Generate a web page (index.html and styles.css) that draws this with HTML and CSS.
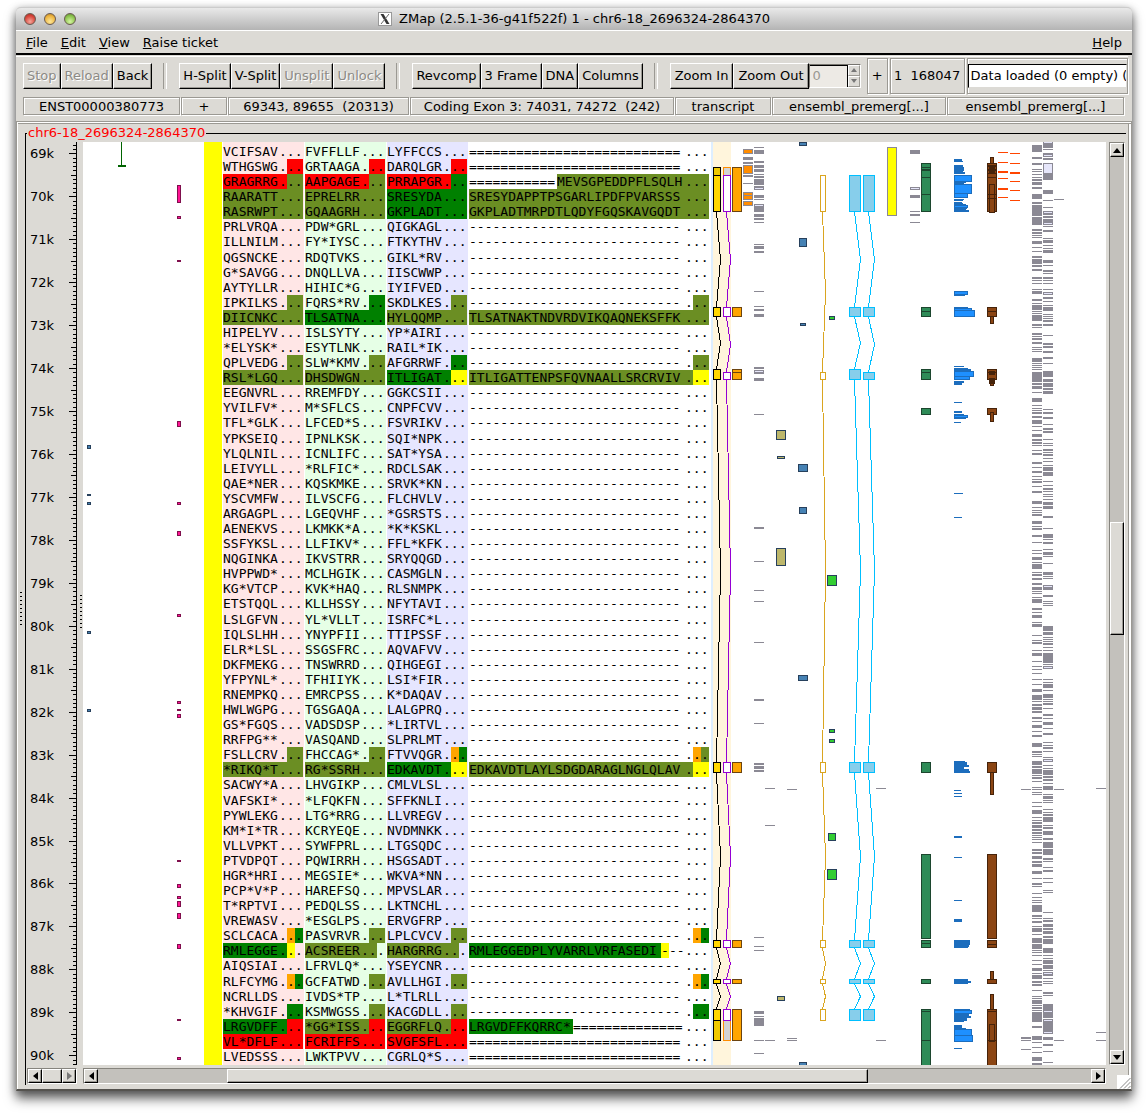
FILE: index.html
```html
<!DOCTYPE html>
<html lang="en">
<head>
<meta charset="utf-8">
<title>ZMap (2.5.1-36-g41f522f) 1 - chr6-18_2696324-2864370</title>
<link rel="stylesheet" href="styles.css">
</head>
<body>
<div class="window">
  <header class="titlebar">
    <div class="lights"><span class="light red"></span><span class="light amber"></span><span class="light green"></span></div>
    <h1 class="title">
      <svg class="xicon" width="14" height="14" viewBox="0 0 14 14" aria-hidden="true"><rect x=".5" y=".5" width="13" height="13" fill="#fff" stroke="#999"/><path d="M2.500 2h3l6 10h-3z" fill="#333"/><path d="M11 2L3 12" stroke="#666" fill="none"/></svg>
      ZMap (2.5.1-36-g41f522f) 1 - chr6-18_2696324-2864370
    </h1>
  </header>

  <nav class="menubar">
    <button type="button"><u>F</u>ile</button>
    <button type="button"><u>E</u>dit</button>
    <button type="button"><u>V</u>iew</button>
    <button type="button"><u>R</u>aise ticket</button>
    <button type="button" class="help"><u>H</u>elp</button>
  </nav>

  <div class="toolbar">
    <div class="group">
      <button type="button" class="btn" disabled>Stop</button><button type="button" class="btn" disabled>Reload</button><button type="button" class="btn">Back</button>
    </div>
    <div class="group">
      <button type="button" class="btn">H-Split</button><button type="button" class="btn">V-Split</button><button type="button" class="btn" disabled>Unsplit</button><button type="button" class="btn" disabled>Unlock</button>
    </div>
    <div class="group">
      <button type="button" class="btn">Revcomp</button><button type="button" class="btn">3 Frame</button><button type="button" class="btn">DNA</button><button type="button" class="btn">Columns</button>
    </div>
    <div class="group last">
      <button type="button" class="btn">Zoom In</button><button type="button" class="btn">Zoom Out</button>
      <div class="spin">
        <input type="text" value="0" aria-label="Filter" disabled>
        <div class="steps">
          <button type="button" disabled aria-label="Increase"><svg width="6" height="4"><path d="M3 0l3 4H0z" fill="#777"/></svg></button>
          <button type="button" disabled aria-label="Decrease"><svg width="6" height="4"><path d="M0 0h6L3 4z" fill="#777"/></svg></button>
        </div>
      </div>
    </div>
    <div class="status">
      <div class="etched">+</div>
      <div class="etched range">1  168047</div>
      <div class="etched entry"><input type="text" value="Data loaded (0 empty) (" aria-label="Load status" readonly></div>
    </div>
  </div>

  <div class="infobar">
    <div class="etched">ENST00000380773</div>
    <div class="etched">+</div>
    <div class="etched">69343, 89655  (20313)</div>
    <div class="etched">Coding Exon 3: 74031, 74272  (242)</div>
    <div class="etched">transcript</div>
    <div class="etched">ensembl_premerg[...]</div>
    <div class="etched">ensembl_premerg[...]</div>
  </div>

  <main class="pane">
    <span class="grip outer"></span>
    <fieldset class="view">
      <legend>chr6-18_2696324-2864370</legend>
      <div class="grid">
        <svg class="ruler" id="ruler" width="50" height="923" viewBox="27 142 50 923"></svg>
        <div class="canvas">
          <svg class="features" id="features" width="1024" height="923" viewBox="83 142 1024 923" shape-rendering="crispEdges"></svg>
          <div class="frames" id="frames"></div>
        </div>
        <div class="scroll vertical">
          <button type="button" aria-label="Scroll up"><svg width="8" height="5"><path d="M4 0l4 5H0z"/></svg></button>
          <div class="trough"><div class="thumb"></div></div>
          <button type="button" aria-label="Scroll down"><svg width="8" height="5"><path d="M0 0h8L4 5z"/></svg></button>
        </div>
        <div class="scroll horizontal small">
          <button type="button" aria-label="Scroll ruler left"><svg width="5" height="8"><path d="M5 0v8L0 4z"/></svg></button>
          <div class="trough"><div class="thumb"></div></div>
          <button type="button" aria-label="Scroll ruler right" disabled><svg width="5" height="8"><path d="M0 0l5 4-5 4z" fill="#777"/></svg></button>
        </div>
        <div class="scroll horizontal">
          <button type="button" aria-label="Scroll left"><svg width="5" height="8"><path d="M5 0v8L0 4z"/></svg></button>
          <div class="trough"><div class="thumb"></div></div>
          <button type="button" aria-label="Scroll right"><svg width="5" height="8"><path d="M0 0l5 4-5 4z"/></svg></button>
        </div>
      </div>
      <span class="grip inner"></span>
    </fieldset>
    <svg class="resize" width="14" height="14" viewBox="0 0 14 14" aria-hidden="true"><rect width="14" height="14" fill="#fff"/><path d="M3 13.500L13.500 3M7 13.500L13.500 7M11 13.500l2.500-2.500" stroke="#888" fill="none"/></svg>
  </main>
</div>
<script src="zmap.js"></script>
</body>
</html>
```
FILE: styles.css
```css
* { box-sizing: border-box; }

body {
  margin: 0;
  background: #fff;
  color: #000;
  font: 13px/16px "DejaVu Sans", sans-serif;
}

button, input {
  font: inherit;
  color: inherit;
  margin: 0;
}

.window {
  margin: 7px 16px 24px;
  background: #dcdad5;
  border-radius: 5px 5px 0 0;
  box-shadow: 0 8px 12px rgba(0, 0, 0, .55), 0 2px 8px rgba(0, 0, 0, .35);
}

/* title bar */
.titlebar {
  position: relative;
  height: 23px;
  border-top: 1px solid #ccc;
  border-radius: 5px 5px 0 0;
  background: linear-gradient(#e9e9e9, #b4b4b4);
}
.lights {
  position: absolute;
  left: 8px;
  top: 5px;
  display: flex;
  gap: 8px;
}
.light {
  width: 12px;
  height: 12px;
  border: 1px solid #6a5a50;
  border-radius: 50%;
}
.red { background: radial-gradient(circle at 50% 75%, #f4a79c, #d8463b 60%, #a8261f); }
.amber { background: radial-gradient(circle at 50% 75%, #fce79a, #edb540 60%, #b47a1c); }
.green { background: radial-gradient(circle at 50% 75%, #d5f5a2, #8cc34e 60%, #568a2a); }
.title {
  display: flex;
  justify-content: center;
  align-items: center;
  gap: 7px;
  height: 22px;
  margin: 0;
  font: 13px/22px "DejaVu Sans", sans-serif;
}

/* menus */
.menubar {
  display: flex;
  gap: 13px;
  height: 25px;
  padding: 2px 10px 0;
  border-top: 1px solid #fff;
  border-bottom: 2px solid #000;
}
.menubar button {
  padding: 0;
  border: 0;
  background: none;
}
.menubar .help { margin-left: auto; }

/* toolbar */
.toolbar {
  display: flex;
  align-items: center;
  height: 38px;
  margin: 1px 4px 0 0;
  padding-left: 7px;
  border-top: 1px solid #fff;
}
.group {
  display: flex;
  align-items: center;
}
.group:not(.last)::after {
  content: "";
  width: 2px;
  height: 26px;
  margin: 0 12px 0 11px;
  border-left: 1px solid #9b9993;
  border-right: 1px solid #fff;
}
.btn {
  height: 26px;
  padding: 0 3px;
  border: 1px solid;
  border-color: #fff #000 #000 #fff;
  box-shadow: inset -1px -1px #9b9993;
  background: #dcdad5;
  white-space: nowrap;
}
.last .btn { padding: 0 4px; }
.btn:disabled {
  color: #8c8a85;
  text-shadow: 1px 1px #fff;
}
.spin {
  display: flex;
  height: 24px;
  width: 52px;
  border: 1px solid;
  border-color: #77756f #fff #fff #77756f;
}
.spin input {
  width: 38px;
  padding: 0 3px;
  border: 1px solid #000;
  border-width: 1px 1px 0 0;
  background: #edeae5;
  color: #9b9993;
}
.steps {
  flex: 1;
  display: flex;
  flex-direction: column;
}
.steps button {
  flex: 1;
  display: flex;
  align-items: center;
  justify-content: center;
  padding: 0;
  border: 1px solid;
  border-color: #fff #9b9993 #9b9993 #fff;
  background: #dcdad5;
}
.etched {
  border: 1px solid #9b9993;
  box-shadow: 1px 1px #fff, inset 1px 1px #fff;
  text-align: center;
  white-space: pre;
}
.status {
  display: flex;
  flex: 1;
  gap: 2px;
  min-width: 0;
  height: 36px;
  margin-left: 6px;
  line-height: 34px;
}
.status .etched { flex: 0 0 21px; }
.status .range { flex-basis: 75px; }
.status .entry {
  flex: 1;
  min-width: 0;
  display: flex;
  align-items: center;
}
.entry input {
  width: 100%;
  height: 24px;
  padding: 0 0 0 2px;
  border: 1px solid;
  border-color: #000 #dcdad5 #dcdad5 #000;
  background: #fff;
}

.infobar {
  display: grid;
  grid-template-columns: 157fr 46fr 181fr 264fr 96fr 174fr 177fr;
  gap: 1px;
  margin: 3px 8px 0 7px;
}
.infobar .etched {
  height: 18px;
  line-height: 17px;
}

/* main view */
.pane {
  position: relative;
  margin-top: 6px;
  padding: 3px 5px 4px 8px;
  border: 1px solid #9b9993;
  border-bottom: 2px solid #55534f;
  box-shadow: inset 1px 1px #fff, inset 0 2px #9b9993, inset -2px 0 #fff, inset -3px 0 #9b9993;
}
.view {
  position: relative;
  min-width: 0;
  margin: 0;
  padding: 1px;
  border: 0 solid #000;
  border-width: 1px 0 0 1px;
}
.view legend {
  padding: 0 1px;
  color: #f00;
}
.grid {
  display: grid;
  grid-template-columns: 50px minmax(0, 1fr) 16px;
  column-gap: 6px;
  row-gap: 3px;
}
.canvas {
  position: relative;
  overflow: hidden;
  margin-right: -3px;
  background: #fff;
}
.features {
  position: absolute;
  left: 0;
  top: 0;
}
.ruler text { font: 13px "DejaVu Sans", sans-serif; }
.frames {
  position: relative;
  display: flex;
  gap: 1px;
  height: 923px;
  margin-left: 140px;
  font: 13px/15px "DejaVu Sans Mono", monospace;
}
.frame {
  display: grid;
  grid-auto-rows: 1fr;
  width: 81px;
  padding: 2px 0 1px;
}
.frame:nth-child(1) { background: #ffe6e6; }
.frame:nth-child(2) { background: #e6ffe6; }
.frame:nth-child(3) { background: #e6e6ff; }
.frame:nth-child(4) { width: 241px; }
.row {
  display: flex;
  min-height: 0;
}
.row span { white-space: pre; }
.r { background: #f00; }
.o { background: #6b8e23; }
.g { background: #008000; }
.a { background: #ffa500; }
.y { background: #ff0; }

/* scrollbars */
.scroll {
  display: flex;
  border: 1px solid;
  border-color: #86847e #fff #fff #86847e;
  background: #c3c1bc;
}
.scroll.vertical { flex-direction: column; }
.scroll.horizontal { height: 16px; }
.scroll button {
  flex: 0 0 14px;
  display: flex;
  align-items: center;
  justify-content: center;
  padding: 0;
  border: 1px solid;
  border-color: #fff #000 #000 #fff;
  box-shadow: inset -1px -1px #9b9993;
  background: #dcdad5;
}
.trough {
  flex: 1;
  display: grid;
}
.vertical .trough { grid-template-rows: 365fr 113fr 415fr; }
.horizontal .trough { grid-template-columns: 129fr 643fr 224fr; }
.small .trough { grid-template-columns: 0 1fr 0; }
.thumb {
  border: 1px solid;
  border-color: #fff #000 #000 #fff;
  box-shadow: inset -1px -1px #9b9993;
  background: #dcdad5;
}
.vertical .thumb { grid-row: 2; }
.horizontal .thumb { grid-column: 2; }
.horizontal:last-child { margin-right: -3px; }

.grip {
  position: absolute;
  width: 2px;
  height: 34px;
  background: repeating-linear-gradient(#000 0 1px, transparent 1px 4px);
}
.grip.outer { left: 3px; top: calc(50% - 14px); }
.grip.inner { left: 54px; top: calc(50% - 18px); }
.resize {
  position: absolute;
  right: 0;
  bottom: 0;
}
```
FILE: zmap.js
```javascript
// Translated sequence: frame 1, 2, 3 and the spliced product, one line per row.
// A bare line uses "-" for the product; "=" marks untranslated sequence.
const ROWS = `
VCIFSAV FVFFLLF LYFFCCS =
WTHGSWG GRTAAGA DARQLGR = n8r2 n8r2 n8r2
GRAGRRG AAPGAGE PRRAPGR ===========MEVSGPEDDPFLSQLH r8o2 r8o2 r8g2 n11o19
RAARATT EPRELRR SRESYDA SRESYDAPPTPSGARLIPDFPVARSSS o10 o10 g10 o30
RASRWPT GQAAGRH GKPLADT GKPLADTMRPDTLQDYFGQSKAVGQDT o10 o10 g10 o30
PRLVRQA PDW*GRL QIGKAGL
ILLNILM FY*IYSC FTKYTHV
QGSNCKE RDQTVKS GIKL*RV
G*SAVGG DNQLLVA IISCWWP
AYTYLLR HIHIC*G IYIFVED
IPKILKS FQRS*RV SKDLKES - n8o2 n8g2 n8o2 n28o2
DIICNKC TLSATNA HYLQQMP TLSATNAKTNDVRDVIKQAQNEKSFFK o10 g10 o10 o30
HIPELYV ISLSYTY YP*AIRI
*ELYSK* ESYTLNK RAIL*IK
QPLVEDG SLW*KMV AFGRRWF - n8o2 n8o2 n8g2 n28o2
RSL*LGQ DHSDWGN ITLIGAT ITLIGATTENPSFQVNAALLSRCRVIV o10 o10 g8y2 o28y2
EEGNVRL RREMFDY GGKCSII
YVILFV* M*SFLCS CNPFCVV
TFL*GLK LFCED*S FSVRIKV
YPKSEIQ IPNLKSK SQI*NPK
YLQLNIL ICNLIFC SAT*YSA
LEIVYLL *RLFIC* RDCLSAK
QAE*NER KQSKMKE SRVK*KN
YSCVMFW ILVSCFG FLCHVLV
ARGAGPL LGEQVHF *GSRSTS
AENEKVS LKMKK*A *K*KSKL
SSFYKSL LLFIKV* FFL*KFK
NQGINKA IKVSTRR SRYQQGD
HVPPWD* MCLHGIK CASMGLN
KG*VTCP KVK*HAQ RLSNMPK
ETSTQQL KLLHSSY NFYTAVI
LSLGFVN YL*VLLT ISRFC*L
IQLSLHH YNYPFII TTIPSSF
ELR*LSL SSGSFRC AQVAFVV
DKFMEKG TNSWRRD QIHGEGI
YFPYNL* TFHIIYK LSI*FIR
RNEMPKQ EMRCPSS K*DAQAV
HWLWGPG TGSGAQA LALGPRQ
GS*FGQS VADSDSP *LIRTVL
RRFPG** VASQAND SLPRLMT
FSLLCRV FHCCAG* FTVVQGR - n8o2 n8o2 n8a1g1 n28a1o1
*RIKQ*T RG*SSRH EDKAVDT EDKAVDTLAYLSDGDARAGLNGLQLAV o10 o10 g8y2 o28y2
SACWY*A LHVGIKP CMLVLSL
VAFSKI* *LFQKFN SFFKNLI
PYWLEKG LTG*RRG LLVREGV
KM*I*TR KCRYEQE NVDMNKK
VLLVPKT SYWFPRL LTGSQDC
PTVDPQT PQWIRRH HSGSADT
HGR*HRI MEGSIE* WKVA*NN
PCP*V*P HAREFSQ MPVSLAR
T*RPTVI PEDQLSS LKTNCHL
VREWASV *ESGLPS ERVGFRP
SCLCACA PASVRVR LPLCVCV - n8a1g1 n8o2 n8o2 n28a1g1
RMLEGGE ACSREER HARGRRG RMLEGGEDPLYVARRLVRFASEDI--- g8y1n1 o9n1 o9n1 g24y1n5
AIQSIAI LFRVLQ* YSEYCNR
RLFCYMG GCFATWD AVLLHGI - n8a1g1 n8o2 n8o2 n28a1g1
NCRLLDS IVDS*TP L*TLRLL
*KHVGIF KSMWGSS KACGDLL - n8g2 n8o2 n8o2 n28g2
LRGVDFF *GG*ISS EGGRFLQ LRGVDFFKQRRC*============== g8r2 o8r2 o8r2 g13n17
VL*DFLF FCRIFFS SVGFSFL = r10 r10 r10
LVEDSSS LWKTPVV CGRLQ*S =`.trim().split('\n').map(line => line.split(' '));

const CHAR = 8;
const frames = document.getElementById('frames');
for (let c = 0; c < 4; c++) {
  const frame = document.createElement('div');
  frame.className = 'frame';
  for (const parts of ROWS) {
    let text = parts[c] || '-';
    if (text.length === 1) text = text.repeat(27);
    const dots = text.length;
    text += '...';
    const runs = parts[4 + c] || 'n' + text.length;
    const row = document.createElement('div');
    row.className = 'row';
    const add = (kind, from, to) => {
      if (to <= from) return;
      const span = document.createElement('span');
      if (kind !== 'n') span.className = kind;
      span.style.width = (to - from) * CHAR + 'px';
      span.textContent = text.slice(from, to);
      row.append(span);
    };
    let at = 0;
    for (const [, kind, count] of runs.matchAll(/([a-z])(\d+)/g)) {
      const end = at + Number(count);
      // the ellipsis is a run of its own, so it lines up down the column
      const cut = Math.min(Math.max(dots, at), end);
      add(kind, at, cut);
      add(kind, cut, end);
      at = end;
    }
    frame.append(row);
  }
  frames.append(frame);
}

const svg = [];
const rect = (x, y, w, h, fill) => svg.push(`<rect x="${x}" y="${y}" width="${w}" height="${h}" fill="${fill}"/>`);
const box = (x, y, w, y2, fill, line) => {
  const h = y2 - y;
  rect(x, y, w, h, line);
  if (h > 2) rect(x + 1, y + 1, w - 2, h - 2, fill);
};
const boxes = (x, w, list, fill, line) => list.split(' ').forEach(s => {
  const [a, b] = s.split('-').map(Number);
  box(x, a, w, b, fill, line);
});
// "y" or "y,height" entries
const bars = (x, w, list, fill) => list.split(' ').forEach(s => {
  const [y, h = 1] = s.split(',').map(Number);
  rect(x, y, w, h, fill);
});
// "y,width,height" entries growing right from x
const steps = (x, list, fill) => list.split(' ').forEach(s => {
  const [y, w, h = 1] = s.split(',').map(Number);
  rect(x, y, w, h, fill);
});
const introns = (x, peak, list, color) => list.split(' ').forEach(s => {
  const [a, b] = s.split('-').map(Number);
  svg.push(`<path d="M${x + .5} ${a}L${peak + .5} ${(a + b) / 2}L${x + .5} ${b}" fill="none" stroke="${color}"/>`);
});

const GREY = '#8b8994', NAVY = '#27405c';

rect(204, 142, 18, 923, '#ff0');
rect(711, 142, 2, 923, '#ddeeff');
rect(713, 142, 18, 923, '#fff5dc');

rect(121, 142, 1, 23, '#006400');
rect(118, 165, 8, 2, '#006400');
boxes(177, 4, '185-203 216-219 260-262 421-427 502-505 531-536 614-617 701-704 709-711 714-718 860-862 884-888 896-899 901-907 913-919 944-949 1019-1021 1057-1060', '#ff1493', '#7f0f4d');
boxes(87, 4, '445-449 494-496 502-505 631-634 709-712', '#4682b4', NAVY);

const GAPS = '212-307 317-369 380-762 773-940 948-979 984-1009';
const GAPS2 = '212-307 317-372 380-762 773-940 948-979 984-1009';
introns(716, 720, GAPS, '#000');
introns(726, 730, GAPS2, '#9400d3');
introns(822, 825, '212-372 380-762 773-940 948-979 984-1009', '#daa520');
introns(854, 860, GAPS, '#00bfff');
introns(868, 874, GAPS2, '#00bfff');
boxes(713, 8, '167-176 1020-1041', '#eec900', '#000');
boxes(713, 8, '175-212 307-317 369-380 762-773 940-948 979-984 1009-1021', '#ffd700', '#000');
boxes(723, 8, '167-176 1020-1041', '#d3d3d3', '#ff8c00');
boxes(723, 8, '175-212 307-317 372-380 762-773 940-948 979-984 1009-1021', '#fff', '#9400d3');
boxes(732, 10, '167-212 307-317 369-380 762-773 940-948 979-984 1009-1041', '#ffa500', '#6b4410');
rect(733, 372, 8, 1, '#6b4410');
boxes(743, 10, '149-154 165-174 192-196 195-200 201-206', '#ff8c00', GREY);
bars(743, 10, '157,3 162,2 175,2 183', GREY);
bars(754, 10, '147 150,4 161,2 165,3 169,3 174 176,2 179,6 186,4 195,3 199 204,8 214,3 218,2 222 244 246,3 251,2 291 306 309,2 314,3 367,2 370,4 378,3 414 527,2 561 590 601 642 699,2 723 763,2 766,3 770,2 937 946 950 1011,3 1016 1018,8 1040 1053', GREY);
bars(755, 8, '188 205 371', '#e6e6fa');
bars(765, 10, '788 825 1040', GREY);
bars(787, 10, '789 1038 1040', GREY);
bars(876, 10, '788 1040', GREY);
boxes(799, 8, '142-146 238-247 507-514 1062-1066', '#4682b4', NAVY);
boxes(800, 6, '323-326', '#4682b4', NAVY);
boxes(798, 10, '464-472 675-681', '#4682b4', NAVY);
boxes(776, 10, '430-440 548-566', '#bdb76b', NAVY);
boxes(777, 8, '456-459 996-1001', '#bdb76b', NAVY);
boxes(820, 6, '175-212 372-380 762-773 940-948 979-984 1009-1021', '#fff', '#daa520');
boxes(829, 6, '316-320 729-733 739-743', '#32cd32', NAVY);
boxes(828, 8, '833-841', '#32cd32', NAVY);
boxes(827, 10, '575-586 869-880', '#32cd32', NAVY);
boxes(849, 12, '175-212 307-317 369-380 762-773 940-948 979-984 1009-1021', '#87ceeb', '#00bfff');
boxes(863, 12, '175-212 307-317 372-380 762-773 940-948 979-984 1009-1021', '#87ceeb', '#00bfff');
boxes(887, 10, '147-216', '#ff0', GREY);
bars(910, 10, '150,4 187,3 195,3 211 214,2 222', GREY);
rect(911, 188, 8, 1, '#e6e6fa');

boxes(921, 10, '163-212 307-317 369-380 408-415 762-773 854-939 940-948 979-984 1009-1067', '#2e8b57', '#1c462e');
bars(922, 8, '167 169,2 177 194 311 372 943 1011 1040', '#1c462e');

const BLUE = '#1c6dbd';
steps(954, '159,8,2 161,9 165,9,2 167,10,4 171,9 172,11,2 182,12,1 183,10 199,10 200,9 202,8 203,9 204,12 208,13 209,12 210,15,2 295,11 307,14 366,10 368,14 369,17,2 381,10,2 383,8,2 402,8 411,8,2 414,10 418,12 422,7 493,9 517,8 761,11 762,13,3 765,15,2 767,10,2 769,15,2 771,16,2 790,7 793,8 796,8 836,8,2 857,8 900,8 919,8,3 940,16,5 945,15,2 947,14 979,14,2 981,17,2 983,14 1009,16 1014,15,2 1016,17,2 1018,13,3 1021,10 1025,8,3 1028,12 1048,8', BLUE);
[[175, 182, 18], [184, 194, 18], [193, 198, 14], [205, 208, 14], [291, 295, 14], [308, 311, 18], [310, 317, 21], [371, 377, 20], [376, 380, 16], [415, 418, 14], [1010, 1014, 18], [1029, 1036, 18], [1035, 1042, 19]]
  .forEach(([a, b, w]) => box(954, a, w, b, '#1e90ff', BLUE));

const BROWN = '#8b4513', DARK = '#46230a';
boxes(990, 4, '157-164 971-980 994-1010', BROWN, DARK);
boxes(987, 10, '163-212 307-317 369-380 408-415 762-773 854-939 940-948 979-984 1009-1067', BROWN, DARK);
boxes(990, 4, '316-324 379-386 412-422 772-795', BROWN, DARK);
boxes(989, 6, '184-213 1024-1042', BROWN, DARK);
bars(988, 8, '165,2 169,2 173 177 194 198 311 372 944 1011 1040', DARK);
bars(989, 6, '167,3 171,3 371,4 378,6', DARK);
bars(998, 10, '152 162 171,2 178 188,2 197', '#ff4500');
bars(1010, 10, '153 163 172,2 181 190 200', '#ff4500');

bars(1032, 10, '145,7 157,2 163,2 169 171 174 177 179,2 182,3 187,2 194,5 202,2 205,11 217,8 229,2 232,2 235 237 241,3 247 251 256,2 259,5 265,2 269,2 277,2 280 283 289 291,3 299,2 303 305,5 311 313 315,6 324,2 327 333,2 336 338,2 342,2 347 349 351 358,4 363 365 367 369 372,10 383,2 386,3 392 398,4 405 408 410 412,2 416,2 420,4 426 430 434,3 439,2 442,2 445 450 453,2 462,2 467 471,2 476 479 481,2 486 491,2 501,3 507 510 512 514,2 521,3 526 528,2 535,2 542 550 553 557,3 562 564,5 572 574,2 578,2 583,2 587,3 591 593 597 599,4 608,2 612 615,3 622 624,3 635 640 642,2 650 653,3 661 666 669 673 679 684 689,3 695,5 701 704,2 707,3 711,2 717,2 721 725,3 731 735,2 743,4 751,2 754 756 761,4 766,2 769,5 775 777,2 781 787 789 792 794 802 806 810,4 817 820 822,2 825,3 829,2 832,2 835 837 839 842 849,2 852,2 856,3 861,2 864,3 871,3 878 883,2 886 893 897 900 902 905,7 915,2 918 921,2 926 928,4 934 938,5 944,5 950 952 955 960 964 968,3 973 975,4 981,2 984,2 990 996 998 1000,4 1005 1007,2 1010 1012,10 1026,2 1036,4 1042 1047 1052 1057,4 1063,2', GREY);
bars(1043, 10, '142,6 149 153,4 158,2 163,17 190,4 200 207 211,4 216,2 219,6 226 230,2 238 240,3 245 248 250,3 260,3 265 270,2 273 277,2 280 283 289 292,3 297,2 301 305 307,4 314 316 318 320,2 324,2 335 343,2 346,2 351,2 357,2 363 371,6 379,3 383,4 388,2 391,3 409 412,2 417,2 424 428,2 431,2 439 443 445 449,2 452 454,2 458 461 465 467,4 472,4 481 485 488,2 491 494 496 499 502,3 506,3 516,2 528 534,4 539 542,2 549 552,3 556 563 572,3 576 578 585,5 595,2 601 603 605 626,5 632,3 637 639 641 643,2 647 650 653,10 664 666,3 679 682 684,4 690 694,4 699 701 703,2 708 714,2 718 722,3 728 733,2 742 745 747,2 751 757 759,3 765 768 770,5 776,2 779,2 783 786,4 794 796,3 800 802 809 812 814,2 817,5 825 827,2 831,4 838,2 842,6 849,6 858,2 861 867 870,2 878 882 890 892 912 918 920,2 924,3 928,2 931,3 936,2 939,5 948,5 955 958 960,4 965,4 970 972,4 978 981 983 992,2 995 1004,14 1019,15 1037,3 1044,2 1051 1062', GREY);
bars(1044, 8, '142 155 164,9 212 223 293 586 667 760 973 1011 1020 1032', '#e6e6fa');
bars(1054, 10, '199 789 1040', GREY);
bars(1021, 10, '789 1037,2 1040 1049', GREY);
bars(1096, 10, '788 1032 1040', GREY);
document.getElementById('features').innerHTML = svg.join('');

// Ruler: one tick per 100 bases
const BASE = 153.3, KILO = 42.95;
let ticks = '', labels = '';
for (let i = -2; i <= 212; i++) {
  const y = Math.round(BASE + i * KILO / 10);
  if (y > 1064) break;
  const len = i % 10 === 0 ? 8 : i % 5 === 0 ? 6 : 4;
  ticks += `<rect x="${77 - len}" y="${y}" width="${len}" height="1"/>`;
  if (i % 10 === 0) labels += `<text x="30" y="${y + 5}">${69 + i / 10}k</text>`;
}
document.getElementById('ruler').innerHTML = '<g shape-rendering="crispEdges">' + ticks + '<rect x="76" y="142" width="1" height="923"/></g>' + labels;
```
